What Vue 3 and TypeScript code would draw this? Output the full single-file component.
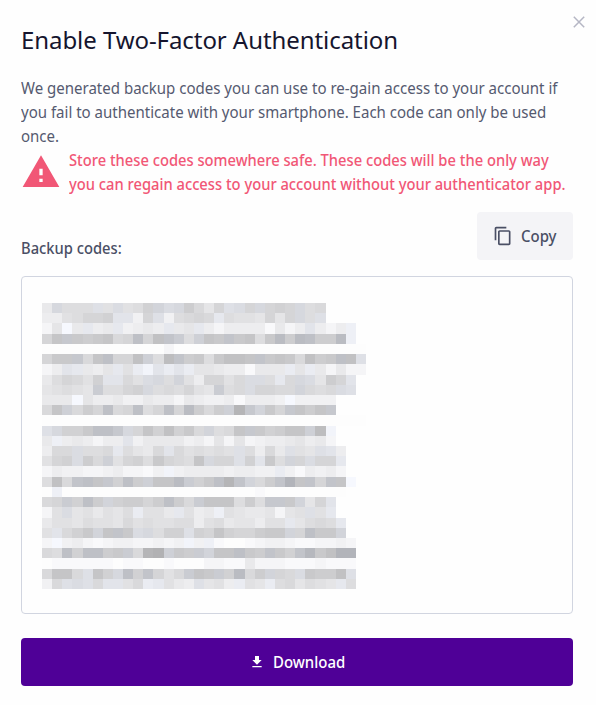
<script setup lang="ts">
const rows: string[] = [
  'fJiiiHhIhilKIJmjgkHIkJklkJij....',
  'eehikklGGdkHdijkjFihhgkgkJiH....',
  'cgBfFefFdefeFfgFeceeeebfceGeceD.',
  'koNnmnojkPkpOMiLonOnoinQmQPmmQD.',
  'aaaaaaaaaaaacaaaaaaaaaaaaaaaaaaa',
  'knnNjoPkkpLiqOmninppoOnonjpmnPpH',
  'ceGFfegFhECGEGEggfeebfffEgEfcfcc',
  'fikjhlGGjhIJiKhekkhjIIiFjJIgmkG.',
  'ghihgMiiklJijikhgMijIkkjjKjijIH.',
  'fffBgeefddfeecfeddebeeedBdddd...',
  'joLjmkPjkPikPkQmjmLsNKnkNomoN...',
  'aaaaaaaaaaaaaaaaaaaaaaaaaaaaaaaa',
  'HJllnPPNJkolplnjKijoNnlmooLqC...',
  'fDefeceeGdffffdecgcgcdeefgefc...',
  'ejjIiijFigfjGjhihihHiejfHhgHGe..',
  'hklImjLhklinkjioJkkHlGniKkIkkF..',
  'ceddccdeccbdCdeeeedeeddEdbedec..',
  'ipjOPoNlPmLooQMlnPsOKjmOSoOkOoB.',
  'aDaaaaaaaaaaaaaaaaaaabaaaaaaaa..',
  'jkMlPmKlmmkmPmjMoooimiNNnKgkG...',
  'chIghfhgiEhhfFhefDhgffgcghHhF...',
  'fhhgihhgjhihhiiehifggehhFgijiF..',
  'hGjlnKoOnIJillHlkolkkmnnKkPnnK..',
  'cBdecbcddccdcdCdDbaabcddcbbccdc.',
  'jiPlPPmnMjstLnmMKooPnmOnlORnpSS.',
  'abbbbbbabbaabaaaccbbfcccbbbcbbb.',
  'joojHolJPlOkhjMonMlQjmKkjInmmpH.',
  'djHIHjGGhjEFhfeHgheEhgEijgihgFi.',
]

// Lowercase letters are neutral greys, uppercase letters are cool greys.
function shade(ch: string): string {
  if (ch === '.') return 'transparent'
  const level = ch.toLowerCase().charCodeAt(0) - 97
  const v = 253 - level * 4
  if (level === 0) return '#fdfdfd'
  if (ch === ch.toLowerCase()) return `rgb(${v}, ${v}, ${Math.min(255, v + 2)})`
  return `rgb(${v - 3}, ${v - 1}, ${Math.min(255, v + 5)})`
}
const cells: string[] = rows.flatMap((r) => r.split('').map(shade))
</script>

<template>
  <main class="modal">
    <header class="head">
      <h1>Enable Two-Factor Authentication</h1>
      <button class="close" aria-label="Close">
        <svg width="12" height="12" viewBox="0 0 12 12"><path d="M.8.8l10.4 10.4M11.2.8L.8 11.2" fill="none" stroke="#b5b6c4" stroke-width="1.5" /></svg>
      </button>
    </header>
    <p class="intro">
      <span>We generated backup codes you can use to re-gain access to your account if</span>
      <span>you fail to authenticate with your smartphone. Each code can only be used</span>
      <span>once.</span>
    </p>
    <div class="warning">
      <svg class="warn-icon" width="40" height="40" viewBox="0 0 24 24"><path d="M1 21h22L12 2 1 21zm12-3h-2v-2h2v2zm0-4h-2v-4h2v4z" fill="#f15776" /></svg>
      <p>
        <span>Store these codes somewhere safe. These codes will be the only way</span>
        <span>you can regain access to your account without your authenticator app.</span>
      </p>
    </div>
    <div class="toolbar">
      <span class="label">Backup codes:</span>
      <button class="copy">
        <svg width="20" height="20" viewBox="0 0 24 24"><path d="M16 1H4c-1.1 0-2 .9-2 2v14h2V3h12V1zm3 4H8c-1.1 0-2 .9-2 2v14c0 1.1.9 2 2 2h11c1.1 0 2-.9 2-2V7c0-1.1-.9-2-2-2zm0 16H8V7h11v14z" fill="#4a4f65" /></svg>
        <span>Copy</span>
      </button>
    </div>
    <section class="codes">
      <div class="mosaic">
        <i v-for="(c, i) in cells" :key="i" :style="{ backgroundColor: c }"></i>
      </div>
    </section>
    <button class="download">
      <svg width="16" height="16" viewBox="0 0 24 24"><path d="M19 9h-4V3H9v6H5l7 7 7-7zM5 18v2h14v-2H5z" fill="#fff" /></svg>
      <span>Download</span>
    </button>
  </main>
</template>

<style>
body { background: #fefefe; }
</style>

<style scoped>
.modal {
  box-sizing: border-box;
  width: 596px;
  height: 705px;
  padding: 20px 23px 0 21px;
  display: flex;
  flex-direction: column;
  font-family: "Noto Sans", "Open Sans", sans-serif;
  font-size: 16px;
  line-height: 24px;
  color: #555a70;
  background: #fefefe;
}
button { border: 0; padding: 0; background: none; font: inherit; color: inherit; }
h1 { margin: 0; font-size: 24px; line-height: 40px; font-weight: 400; letter-spacing: -0.07px; color: #15152e; white-space: nowrap; }
.head { height: 56px; display: flex; justify-content: space-between; align-items: flex-start; }
.close { margin: -4px -12px 0 0; height: 12px; display: flex; }
.intro, .warning p { margin: 0; }
.intro span, .warning p span { display: block; white-space: nowrap; width: max-content; transform: scaleX(0.939); transform-origin: left; }
.warning { display: flex; gap: 8px; height: 48px; color: #f15776; font-weight: 500; }
.warning p { width: 504px; }
.warning p span { transform: scaleX(0.92); }
.warn-icon { flex: none; margin-top: 4px; }
.toolbar { display: flex; justify-content: space-between; height: 48px; margin-top: 16px; }
.label { align-self: flex-end; font-weight: 500; color: #4a4f65; transform: scaleX(0.92); transform-origin: left; }
.copy { width: 96px; height: 48px; border-radius: 4px; background: #f4f4f7; color: #4a4f65; display: flex; align-items: center; justify-content: center; gap: 8px; font-weight: 500; }
.copy span { transform: scaleX(0.935); transform-origin: left; margin-right: -2.5px; }
.codes { box-sizing: border-box; height: 338px; margin-top: 16px; padding: 26px 20px; border: 1px solid #d1d5e0; border-radius: 4px; }
.mosaic { width: 324px; height: 286px; display: grid; grid-template-columns: repeat(32, 1fr); grid-template-rows: repeat(28, 1fr); }
.download { height: 48px; margin-top: 24px; border-radius: 4px; background: #4f0097; color: #fff; display: flex; align-items: center; justify-content: center; gap: 8px; font-weight: 500; }
.download span { transform: scaleX(0.935); transform-origin: left; margin-right: -5px; }
</style>
